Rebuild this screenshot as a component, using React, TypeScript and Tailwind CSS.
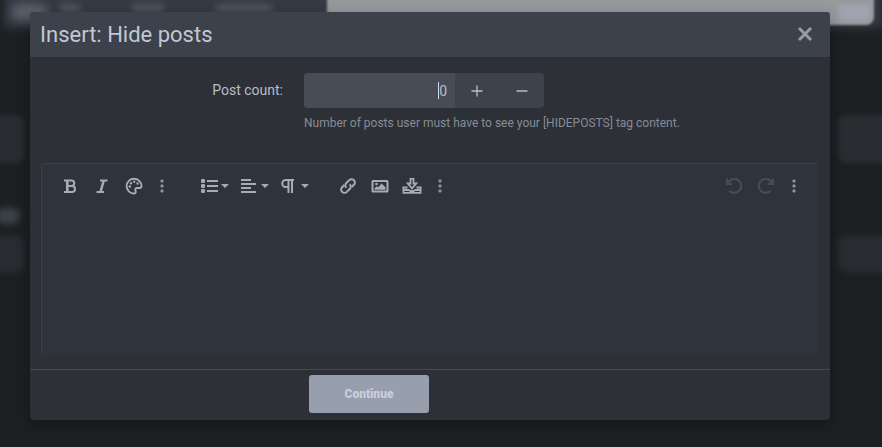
import React, { useState } from "react";

type IconProps = { className?: string };

const line = {
  fill: "none",
  stroke: "currentColor",
  strokeWidth: 2,
  viewBox: "0 0 20 18",
};

const BoldIcon = ({ className }: IconProps) => (
  <svg className={className} {...line}>
    <path d="M4 3.500h7.500a2.700 2.700 0 0 1 0 5.500H8M4 15h8a3 3 0 0 0 0-6H8" />
    <path d="M7.300 3.500V15" strokeWidth="2.700" />
  </svg>
);

const ItalicIcon = ({ className }: IconProps) => (
  <svg className={className} {...line}>
    <path d="M8 3.500h7.500M4.500 15H12" />
    <path d="M11.700 3.500 8.500 15" strokeWidth="2.500" />
  </svg>
);

const PaletteIcon = ({ className }: IconProps) => (
  <svg className={className} {...line} strokeWidth={1.900}>
    <path d="M10 1.700a7.400 7.400 0 1 0 0 14.800c1.800 0 2-1.500 1.500-2.600-.7-1.600.1-2.900 1.700-2.900h2.300c1.300 0 2-.8 2-2 0-4-3.400-7.300-7.500-7.300Z" />
    <g fill="currentColor" stroke="none">
      <circle cx="5.800" cy="9.500" r="1.200" />
      <circle cx="7" cy="6.200" r="1.200" />
      <circle cx="10.200" cy="4.800" r="1.200" />
      <circle cx="13.600" cy="6.500" r="1.200" />
    </g>
  </svg>
);

const ListIcon = ({ className }: IconProps) => (
  <svg className={className} {...line} viewBox="0 0 17 18">
    <path d="M6 4h11M6 9h11M6 14h11" />
    <g fill="currentColor" stroke="none">
      <rect y="2" width="4" height="4" rx="1.200" />
      <rect y="7" width="4" height="4" rx="1.200" />
      <rect y="12" width="4" height="4" rx="1.200" />
    </g>
  </svg>
);

const AlignIcon = ({ className }: IconProps) => (
  <svg className={className} {...line} viewBox="0 0 17 18">
    <path d="M0 3h10M0 7h15M0 11h10M0 15h15" />
  </svg>
);

const ParagraphIcon = ({ className }: IconProps) => (
  <svg className={className} {...line} viewBox="0 0 17 18">
    <path d="M13 3H4.700a3.500 3.500 0 0 0 0 7H7M7.500 3v13M11 3v13" />
  </svg>
);

const LinkIcon = ({ className }: IconProps) => (
  <svg className={className} {...line}>
    <path d="M8.300 10.700a3.300 3.300 0 0 1 0-4.700l2.900-2.900a3.300 3.300 0 0 1 4.700 4.700l-2.200 2.200" />
    <path d="M11.700 7.300a3.300 3.300 0 0 1 0 4.700l-2.900 2.900a3.300 3.300 0 0 1-4.700-4.700l2.200-2.200" />
  </svg>
);

const ImageIcon = ({ className }: IconProps) => (
  <svg className={className} {...line}>
    <rect x="2.500" y="4" width="15" height="10.500" rx=".5" />
    <g fill="currentColor" stroke="none">
      <circle cx="6.500" cy="7" r="1.300" />
      <path d="M4.500 12.800v-1.500l2.300-2 1.500 1L11.500 6.500l4 3.700v2.600Z" />
    </g>
  </svg>
);

const InboxIcon = ({ className }: IconProps) => (
  <svg className={className} {...line} strokeWidth={1.800}>
    <path d="M5.500 10.500H1.400v5.300h17.200v-5.300h-4.100" />
    <path d="M8.500 1.800v4.700H5.700l4.300 4.800 4.300-4.800h-2.800V1.800Z" />
    <path d="M2 13h4.500L8.500 14h3l2-1H18" />
  </svg>
);

const UndoIcon = ({ className }: IconProps) => (
  <svg className={className} {...line} strokeWidth={2.200}>
    <path d="M3 1.500v5.300h5.300" />
    <path d="M3.600 6.600a7 7 0 1 1 1.600 7.200" />
  </svg>
);

const DotsIcon = ({ className }: IconProps) => (
  <svg className={className} viewBox="0 0 6 18" fill="currentColor">
    <rect x="1.500" y="2.500" width="3" height="3" rx="1" />
    <rect x="1.500" y="7.500" width="3" height="3" rx="1" />
    <rect x="1.500" y="12.500" width="3" height="3" rx="1" />
  </svg>
);

const CaretIcon = ({ className }: IconProps) => (
  <svg className={className} viewBox="0 0 8 4" fill="currentColor">
    <path d="M0 0h8L4 4Z" />
  </svg>
);

interface ToolProps {
  label: string;
  disabled?: boolean;
  children: React.ReactNode;
}

const Tool = ({ label, disabled, children }: ToolProps) => (
  <button
    type="button"
    aria-label={label}
    disabled={disabled}
    className="flex h-8 w-8 items-center justify-center disabled:text-[#464b55]"
  >
    {children}
  </button>
);

const MoreTool = ({ label }: { label: string }) => (
  <button
    type="button"
    aria-label={label}
    className="flex h-8 w-6 items-center justify-center text-[#8f949e]"
  >
    <DotsIcon className="h-[18px] w-[6px]" />
  </button>
);

const DropdownTool = ({ label, children }: ToolProps) => (
  <button
    type="button"
    aria-label={label}
    className="flex h-8 w-10 items-center gap-[3px] pl-2"
  >
    {children}
    <CaretIcon className="h-1 w-2" />
  </button>
);

const icon = "h-[18px] w-5";
const narrowIcon = "h-[18px] w-[17px]";

// Dimmed, out of focus page behind the dialog
function Backdrop() {
  return (
    <div className="absolute inset-0 overflow-hidden" aria-hidden="true">
      <div className="absolute -top-4 left-1 right-0 h-11 bg-[#353a44] blur-[4px]" />
      <div className="absolute left-3 top-1 h-4 w-9 rounded-full bg-[#5b6069] blur-[4px]" />
      <div className="absolute left-15 top-1 h-2 w-5 bg-[#50555f] blur-[3px]" />
      <div className="absolute left-33 top-1 h-2 w-8 bg-[#50555f] blur-[3px]" />
      <div className="absolute left-54 top-1 h-2 w-14 bg-[#50555f] blur-[3px]" />
      <div className="absolute -top-3 left-[327px] right-2 h-[37px] rounded-lg bg-[#98999c] blur-[1px]" />
      <div className="absolute right-3 top-1 h-4 w-8 rounded bg-[#9fa3b0] blur-[2px]" />
      <div className="absolute -left-3 top-[115px] h-12 w-9 rounded-lg bg-[#292d32] blur-[2px]" />
      <div className="absolute -left-1 top-[208px] h-4 w-6 rounded-full bg-[#3c4149] blur-[3px]" />
      <div className="absolute -left-3 top-[236px] h-9 w-9 rounded-lg bg-[#292d32] blur-[3px]" />
      <div className="absolute -right-3 top-[115px] h-12 w-14 rounded-lg bg-[#292d32] blur-[2px]" />
      <div className="absolute -right-3 top-[236px] h-9 w-14 rounded-lg bg-[#292d32] blur-[3px]" />
    </div>
  );
}

export default function App() {
  const [count, setCount] = useState("0");
  const step = (by: number) =>
    setCount(String(Math.max(0, (Number(count) || 0) + by)));

  return (
    <div className="relative min-h-screen bg-[#1c2022] pt-3 pr-[52px] pb-7 pl-[30px] font-['Roboto','Liberation_Sans',sans-serif] text-[#b9bdc8]">
      <Backdrop />

      <div
        role="dialog"
        aria-labelledby="dialog-title"
        className="relative overflow-hidden rounded-[4px] bg-[#2d3037] shadow-[0_5px_15px_rgba(0,0,0,0.3)]"
      >
        {/* Title bar */}
        <div className="flex h-[45px] items-center justify-between bg-[#3c414b] pr-4 pl-[10px]">
          <h1 id="dialog-title" className="text-[22px] leading-7 text-[#c3c7d3]">
            Insert: Hide posts
          </h1>
          <button type="button" aria-label="Close" className="text-[#969ba6]">
            <svg
              className="h-[18px] w-[18px]"
              viewBox="0 0 18 18"
              fill="none"
              stroke="currentColor"
              strokeWidth="3"
            >
              <path d="M3 2l12 12M15 2 3 14" />
            </svg>
          </button>
        </div>

        <form onSubmit={(e) => e.preventDefault()}>
          {/* Post count */}
          <div className="flex pt-4">
            <label
              htmlFor="post-count"
              className="w-[253px] shrink-0 text-right text-[14px] leading-[35px]"
            >
              Post count:
            </label>
            <div className="pl-[21px]">
              <div className="flex h-[35px] w-60 overflow-hidden rounded-[4px] bg-[#3d424c]">
                <div className="relative flex w-[151px] items-center bg-[#474c57] pr-2">
                  <input
                    id="post-count"
                    type="text"
                    inputMode="numeric"
                    value={count}
                    onChange={(e) => setCount(e.target.value)}
                    className="min-w-0 flex-1 text-right text-[14px] leading-5 caret-transparent outline-none"
                  />
                  {/* Text cursor */}
                  <span className="absolute right-4 h-[17px] w-px bg-[#d5d8e0]" />
                </div>
                <button
                  type="button"
                  aria-label="Increase"
                  onClick={() => step(1)}
                  className="flex flex-1 items-center justify-center"
                >
                  <svg
                    className="h-3 w-3"
                    viewBox="0 0 12 12"
                    stroke="currentColor"
                    strokeWidth="1.300"
                  >
                    <path d="M.5 6h11M6 .5v11" />
                  </svg>
                </button>
                <button
                  type="button"
                  aria-label="Decrease"
                  onClick={() => step(-1)}
                  className="flex flex-1 items-center justify-center"
                >
                  <svg
                    className="h-3 w-3"
                    viewBox="0 0 12 12"
                    stroke="currentColor"
                    strokeWidth="1.300"
                  >
                    <path d="M.5 6h11" />
                  </svg>
                </button>
              </div>
              <p className="mt-[5px] text-[12px] leading-5 text-[#888c96]">
                Number of posts user must have to see your [HIDEPOSTS] tag
                content.
              </p>
            </div>
          </div>

          {/* Editor */}
          <div className="mt-[30px] mr-3 mb-[14px] ml-[11px] rounded-[4px] border-t border-l border-[#3c414b] bg-[#2e333c]">
            <div className="flex items-center gap-[19px] px-3 pt-[6px] text-[#a6abb6]">
              <div className="flex">
                <Tool label="Bold">
                  <BoldIcon className={icon} />
                </Tool>
                <Tool label="Italic">
                  <ItalicIcon className={icon} />
                </Tool>
                <Tool label="Text color">
                  <PaletteIcon className={icon} />
                </Tool>
                <MoreTool label="More text options" />
              </div>
              <div className="flex">
                <DropdownTool label="List">
                  <ListIcon className={narrowIcon} />
                </DropdownTool>
                <DropdownTool label="Alignment">
                  <AlignIcon className={narrowIcon} />
                </DropdownTool>
                <DropdownTool label="Paragraph format">
                  <ParagraphIcon className={narrowIcon} />
                </DropdownTool>
              </div>
              <div className="flex">
                <Tool label="Insert link">
                  <LinkIcon className={icon} />
                </Tool>
                <Tool label="Insert image">
                  <ImageIcon className={icon} />
                </Tool>
                <Tool label="Insert file">
                  <InboxIcon className={icon} />
                </Tool>
                <MoreTool label="More insert options" />
              </div>
              <div className="ml-auto flex">
                <Tool label="Undo" disabled>
                  <UndoIcon className={icon} />
                </Tool>
                <Tool label="Redo" disabled>
                  <UndoIcon className="h-[18px] w-5 -scale-x-100" />
                </Tool>
                <MoreTool label="More options" />
              </div>
            </div>
            <textarea
              aria-label="Content"
              className="block h-[153px] w-full resize-none px-4 py-2 text-[15px] outline-none"
            />
          </div>

          {/* Footer */}
          <div className="border-t border-[#454a54] pt-[5px] pb-[7px] pl-[279px]">
            <button
              type="submit"
              className="h-[38px] w-30 rounded-[3px] bg-[#979eae] text-[12px] font-black text-[#c9cedb]"
            >
              Continue
            </button>
          </div>
        </form>
      </div>
    </div>
  );
}
